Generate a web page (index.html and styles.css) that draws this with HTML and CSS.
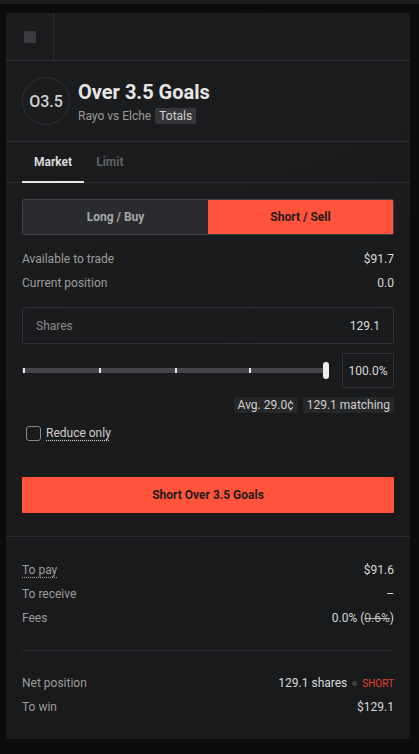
FILE: index.html
```html
<!DOCTYPE html>
<html>
<head>
<meta charset="utf-8">
<link rel="stylesheet" href="styles.css">
</head>
<body>
<div class="topstrip"></div>
<div class="card">
  <div class="headrow">
    <div class="headcell"><span class="sq"></span></div>
  </div>
  <div class="info">
    <div class="logo">O3.5</div>
    <div class="titles">
      <div class="title">Over 3.5 Goals</div>
      <div class="sub"><span>Rayo vs Elche</span><span class="tag">Totals</span></div>
    </div>
  </div>
  <div class="tabs">
    <div class="tab active">Market</div>
    <div class="tab">Limit</div>
  </div>
  <div class="body">
    <div class="toggle">
      <div class="tg long">Long / Buy</div>
      <div class="tg short">Short / Sell</div>
    </div>
    <div class="rows first">
      <div class="row"><span class="lbl">Available to trade</span><span class="val">$91.7</span></div>
      <div class="row"><span class="lbl">Current position</span><span class="val">0.0</span></div>
    </div>
    <div class="input"><span class="ph">Shares</span><span class="inval">129.1</span></div>
    <div class="sliderrow">
      <div class="slider">
        <div class="track"></div>
        <span class="tick t0"></span><span class="tick t1"></span><span class="tick t2"></span><span class="tick t3"></span>
        <span class="thumb"></span>
      </div>
      <div class="pct">100.0%</div>
    </div>
    <div class="badges"><span class="badge">Avg. 29.0¢</span><span class="badge">129.1 matching</span></div>
    <label class="check"><span class="box"></span><span class="dotted">Reduce only</span></label>
    <button class="cta">Short Over 3.5 Goals</button>
  </div>
  <div class="summary">
    <div class="row"><span class="lbl dotted">To pay</span><span class="val">$91.6</span></div>
    <div class="row"><span class="lbl">To receive</span><span class="val">–</span></div>
    <div class="row"><span class="lbl">Fees</span><span class="val">0.0% (<s>0.6%</s>)</span></div>
  </div>
  <div class="net">
    <div class="row"><span class="lbl">Net position</span><span class="val">129.1 shares<span class="dot"></span><span class="side">SHORT</span></span></div>
    <div class="row"><span class="lbl">To win</span><span class="val">$129.1</span></div>
  </div>
</div>
</body>
</html>
```

FILE: styles.css
```css
* { box-sizing: border-box; }
html, body { margin: 0; padding: 0; }
body {
  background: #0b0c0e;
  width: 419px;
  height: 754px;
  overflow: hidden;
  font-family: Roboto, Inter, "Liberation Sans", sans-serif;
  color: #d6d6d6;
  font-size: 12px;
}
.topstrip { height: 4px; background: #1c1d1f; }
.card {
  margin: 9px 9px 0 6px;
  width: 404px;
  height: 726px;
  background: linear-gradient(160deg, #1b1c1e, #18191b);
  border-radius: 0 0 4px 4px;
  display: flex;
  flex-direction: column;
}
.headrow {
  height: 48px;
  border-bottom: 1px solid #2c2d30;
  display: flex;
}
.headcell {
  width: 48px;
  border-right: 1px solid #2c2d30;
  display: flex;
  align-items: center;
  justify-content: center;
}
.sq { width: 12px; height: 12px; background: #3b3c3f; border-radius: 2px; }
.info {
  display: flex;
  align-items: center;
  gap: 8px;
  padding: 16px 16px 16px 16px;
  border-bottom: 1px solid #2c2d30;
}
.logo {
  width: 48px; height: 48px;
  border: 1px solid #303134;
  border-radius: 50%;
  display: flex; align-items: center; justify-content: center;
  font-size: 16px; font-weight: 500; color: #cfcfcf;
}
.titles { display: flex; flex-direction: column; gap: 4px; padding-top: 1px; }
.title { font-size: 20px; font-weight: 700; color: #e6e6e6; line-height: 24px; }
.sub { display: flex; align-items: center; gap: 4px; color: #9a9a9a; font-size: 12px; }
.tag { background: #353639; color: #d0d0d0; padding: 1px 4px; border-radius: 2px; line-height: 14px; }
.tabs {
  display: flex;
  padding: 0 16px;
  height: 41px;
  border-bottom: 1px solid #2c2d30;
}
.tab {
  padding: 0 12px;
  display: flex; align-items: center;
  font-weight: 700; color: #5f6064; font-size: 12px;
  border-bottom: 2px solid transparent;
  margin-bottom: -1px;
}
.tab.active { color: #d8d8d8; border-bottom-color: #e6e6e6; }
.body { padding: 16px 16px 23px; display: flex; flex-direction: column; border-bottom: 1px solid #2a2b2e; }
.toggle {
  display: flex; height: 36px;
  border: 1px solid #404144; border-radius: 2px;
  overflow: hidden;
}
.tg { flex: 1; display: flex; align-items: center; justify-content: center; font-weight: 700; font-size: 12px; }
.long { background: #2a2b2e; color: #a8a8a8; }
.short { background: #ff543b; color: #1f1a19; }
.rows.first { margin-top: 12px; }
.row { display: flex; justify-content: space-between; align-items: center; height: 24px; }
.lbl { color: #9c9c9c; }
.val { color: #d9d9d9; display: flex; align-items: center; }
.input {
  margin-top: 12px; height: 37px;
  border: 1px solid #313235; border-radius: 2px;
  display: flex; align-items: center; justify-content: space-between;
  padding: 0 13px;
}
.ph { color: #8a8a8a; }
.inval { color: #d9d9d9; }
.sliderrow { margin-top: 9px; display: flex; align-items: center; gap: 13px; }
.slider { flex: 1; position: relative; height: 35px; display: flex; align-items: center; }
.track { width: 100%; height: 5px; background: #444548; border-radius: 1px; }
.tick { position: absolute; top: 15px; width: 2px; height: 5px; background: #e8e8e8; }
.t0 { left: 1px; } .t1 { left: 77px; } .t2 { left: 153px; } .t3 { left: 227px; }
.thumb { position: absolute; right: 0; top: 9px; width: 6px; height: 17px; background: #eeeeee; border-radius: 3px; }
.pct {
  width: 52px; height: 35px;
  border: 1px solid #313235; border-radius: 2px;
  display: flex; align-items: center; justify-content: center;
  color: #d9d9d9;
}
.badges { margin-top: 9px; display: flex; justify-content: flex-end; gap: 5px; }
.badge { background: #262729; color: #d0d0d0; padding: 0 4px; line-height: 16px; border-radius: 2px; }
.check { margin-top: 12px; margin-left: 4px; display: flex; align-items: center; gap: 5px; color: #d0d0d0; height: 16px; }
.box { width: 15px; height: 15px; border: 1px solid #8a8a8a; border-radius: 3px; }
.dotted { text-decoration: underline dotted; text-underline-offset: 3px; }
.cta {
  margin-top: 36px; height: 36px;
  background: #ff543b; color: #1f1a19;
  border: none; border-radius: 1px;
  font-family: inherit; font-weight: 700; font-size: 12px;
}
.summary { padding: 21px 16px 20px; }
.net { margin: 0 16px; padding: 20px 0 0; border-top: 1px solid #2a2b2e; }
.dot { width: 5px; height: 5px; border-radius: 50%; background: #3e3f42; margin: 0 5px; }
.side { color: #e8442f; font-size: 10px; }
s { color: #bdbdbd; }
```
